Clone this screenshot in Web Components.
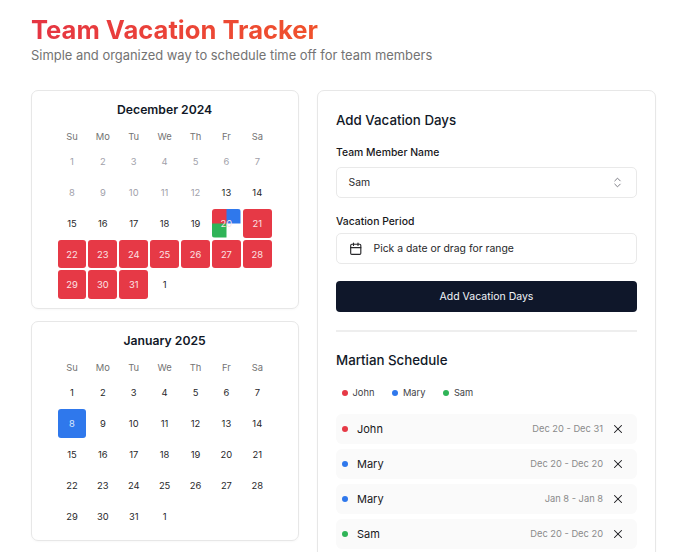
<!DOCTYPE html>
<html>
<head>
<meta charset="utf-8">
<title>Team Vacation Tracker</title>
<style>
html, body { margin: 0; height: 552px; overflow: hidden; background: #fff; }
body { font-family: Inter, "Liberation Sans", sans-serif; color: #0f172a; }
</style>
</head>
<body>
<tracker-app></tracker-app>

<template id="app_template">
<style>
:host { display: block; padding: 15px 24px 0 31px; }
.columns { display: flex; align-items: flex-start; column-gap: 18px; margin-top: 26px; }
.calendars { display: flex; flex-direction: column; row-gap: 12px; width: 268px; flex: none; }
</style>
<page-header></page-header>
<div class="columns">
    <div class="calendars">
        <month-calendar title="December 2024" muted="12" booked="21-31" split="20"></month-calendar>
        <month-calendar title="January 2025" selected="8"></month-calendar>
    </div>
    <vacation-panel></vacation-panel>
</div>
</template>

<template id="header_template">
<style>
:host { display: block; }
h1 {
    margin: 0;
    font-size: 25.6px;
    line-height: 30px;
    font-weight: 700;
    width: fit-content;
    background: linear-gradient(90deg, #e53543, #f0522c);
    -webkit-background-clip: text;
    background-clip: text;
    color: transparent;
}
p { margin: 1px 0 0; font-size: 12.93px; line-height: 18px; color: #737373; }
</style>
<h1>Team Vacation Tracker</h1>
<p>Simple and organized way to schedule time off for team members</p>
</template>

<template id="calendar_template">
<style>
:host { display: block; }
.card {
    box-sizing: border-box;
    border: 1px solid #e7e7e7;
    border-radius: 7px;
    padding: 11px 26.25px 9px 25.5px;
    box-shadow: 0 1px 2px rgba(0, 0, 0, 0.03);
}
h2 { margin: 0 0 11px; text-align: center; font-size: 12.2px; line-height: 16px; font-weight: 600; color: #111827; }
.grid { display: grid; grid-template-columns: repeat(7, 1fr); gap: 2px; }
.head { height: 16px; line-height: 16px; text-align: center; font-size: 9.4px; color: #737373; }
.day {
    height: 28.86px;
    border-radius: 3px;
    display: flex;
    align-items: center;
    justify-content: center;
    font-size: 9.4px;
    color: #27272a;
    position: relative;
}
.muted { color: #a1a1aa; }
.booked { background: #e63946; color: #fbe3e5; }
.selected { background: #2f78ec; color: #dbe8fd; }
.split {
    color: #fbe3e5;
    background:
        linear-gradient(#e63946, #e63946) 0 0 / 50% 50% no-repeat,
        linear-gradient(#2f78ec, #2f78ec) 100% 0 / 50% 50% no-repeat,
        linear-gradient(#2fb457, #2fb457) 0 100% / 50% 50% no-repeat;
}
</style>
<div class="card">
    <h2></h2>
    <div class="grid"></div>
</div>
</template>

<template id="panel_template">
<style>
:host { display: block; width: 339px; flex: none; }
.card {
    box-sizing: border-box;
    border: 1px solid #e7e7e7;
    border-radius: 7px;
    padding: 19px 18px 18px;
    box-shadow: 0 1px 2px rgba(0, 0, 0, 0.03);
}
h2 { margin: 0; font-size: 13.3px; line-height: 20px; font-weight: 500; color: #111827; }
label { display: block; font-size: 10.4px; line-height: 14px; font-weight: 450; color: #18181b; }
.name-field { margin-top: 16px; }
.name-field .control { margin-top: 7px; }
.period-field { margin-top: 17px; }
.period-field .control { margin-top: 4px; }
.control {
    box-sizing: border-box;
    height: 31px;
    border: 1px solid #e9e9e9;
    border-radius: 5px;
    display: flex;
    align-items: center;
    padding: 0 12px 0 11.5px;
    font-size: 10.4px;
    color: #27272a;
}
.control span { flex: 1; }
.date { column-gap: 11.5px; }
svg { flex: none; fill: none; stroke: currentColor; stroke-linecap: round; stroke-linejoin: round; }
.chevrons { color: #71717a; }
button {
    display: block;
    width: 100%;
    height: 31px;
    margin-top: 17px;
    border: 0;
    border-radius: 4px;
    background: #0f172a;
    color: #f1f5f9;
    font: 400 10.5px Inter, "Liberation Sans", sans-serif;
}
hr { border: 0; height: 1.5px; background: #eeeeee; margin: 18px 0 18px; }
.legend { display: flex; column-gap: 18px; padding-left: 6px; margin: 16px 0 14px; }
.rows { display: flex; flex-direction: column; row-gap: 5px; }
</style>
<div class="card">
    <h2>Add Vacation Days</h2>
    <div class="name-field">
        <label>Team Member Name</label>
        <div class="control">
            <span>Sam</span>
            <svg class="chevrons" width="13" height="13" viewBox="0 0 24 24" stroke-width="1.7"><path d="m7 15 5 5 5-5"/><path d="m7 9 5-5 5 5"/></svg>
        </div>
    </div>
    <div class="period-field">
        <label>Vacation Period</label>
        <div class="control date">
            <svg width="13.5" height="13.5" viewBox="0 0 24 24" stroke-width="2"><path d="M8 2v4"/><path d="M16 2v4"/><rect x="3" y="4" width="18" height="18" rx="2"/><path d="M3 10h18"/></svg>
            <span>Pick a date or drag for range</span>
        </div>
    </div>
    <button>Add Vacation Days</button>
    <hr>
    <h2>Martian Schedule</h2>
    <div class="legend">
        <legend-item color="#e63946">John</legend-item>
        <legend-item color="#2f78ec">Mary</legend-item>
        <legend-item color="#2fb457">Sam</legend-item>
    </div>
    <div class="rows">
        <schedule-row color="#e63946" range="Dec 20 - Dec 31">John</schedule-row>
        <schedule-row color="#2f78ec" range="Dec 20 - Dec 20">Mary</schedule-row>
        <schedule-row color="#2f78ec" range="Jan 8 - Jan 8">Mary</schedule-row>
        <schedule-row color="#2fb457" range="Dec 20 - Dec 20">Sam</schedule-row>
    </div>
</div>
</template>

<template id="legend_template">
<style>
:host { display: flex; align-items: center; column-gap: 4.5px; font-size: 9.3px; line-height: 14px; color: #3f3f46; }
i { width: 6px; height: 6px; border-radius: 50%; background: var(--dot); }
</style>
<i></i><slot></slot>
</template>

<template id="row_template">
<style>
:host { display: flex; align-items: center; height: 30px; padding: 0 12px 0 6px; border-radius: 6px; background: #fafafa; }
i { width: 6px; height: 6px; border-radius: 50%; background: var(--dot); margin-right: 9px; }
.name { flex: 1; font-size: 11px; font-weight: 400; color: #18181b; }
.range { font-size: 9.3px; color: #8a8a8a; margin-right: 8px; }
svg { fill: none; stroke: #18181b; stroke-width: 1.8; stroke-linecap: round; stroke-linejoin: round; }
</style>
<i></i>
<span class="name"><slot></slot></span>
<span class="range"></span>
<svg width="14" height="14" viewBox="0 0 24 24"><path d="M18 6 6 18"/><path d="m6 6 12 12"/></svg>
</template>

<script>
// Clones a template into an open shadow root
function shadowFrom(el, id) {
    const shadow = el.attachShadow({ mode: "open" });
    shadow.appendChild(document.getElementById(id).content.cloneNode(true));
    return shadow;
}

class TrackerApp extends HTMLElement {
    connectedCallback() {
        if (!this.shadowRoot) shadowFrom(this, "app_template");
    }
}

class PageHeader extends HTMLElement {
    connectedCallback() {
        if (!this.shadowRoot) shadowFrom(this, "header_template");
    }
}

class MonthCalendar extends HTMLElement {
    connectedCallback() {
        if (this.shadowRoot) return;
        const shadow = shadowFrom(this, "calendar_template");
        shadow.querySelector("h2").textContent = this.getAttribute("title");
        this.removeAttribute("title");
        const grid = shadow.querySelector(".grid");
        for (const name of ["Su", "Mo", "Tu", "We", "Th", "Fr", "Sa"]) {
            const head = document.createElement("div");
            head.className = "head";
            head.textContent = name;
            grid.appendChild(head);
        }
        const muted = Number(this.getAttribute("muted") || 0);
        const selected = Number(this.getAttribute("selected") || 0);
        const split = Number(this.getAttribute("split") || 0);
        const [from, to] = (this.getAttribute("booked") || "0-0").split("-").map(Number);
        for (let d = 1; d <= 32; d++) {
            const cell = document.createElement("div");
            cell.className = "day";
            // the 32nd cell is the spill-over "1" of the next month
            cell.textContent = d === 32 ? 1 : d;
            if (d <= muted) cell.classList.add("muted");
            if (d >= from && d <= to) cell.classList.add("booked");
            if (d === selected) cell.classList.add("selected");
            if (d === split) cell.classList.add("split");
            grid.appendChild(cell);
        }
    }
}

class VacationPanel extends HTMLElement {
    connectedCallback() {
        if (!this.shadowRoot) shadowFrom(this, "panel_template");
    }
}

class LegendItem extends HTMLElement {
    connectedCallback() {
        if (this.shadowRoot) return;
        shadowFrom(this, "legend_template");
        this.style.setProperty("--dot", this.getAttribute("color"));
    }
}

class ScheduleRow extends HTMLElement {
    connectedCallback() {
        if (this.shadowRoot) return;
        const shadow = shadowFrom(this, "row_template");
        this.style.setProperty("--dot", this.getAttribute("color"));
        shadow.querySelector(".range").textContent = this.getAttribute("range");
    }
}

customElements.define("month-calendar", MonthCalendar);
customElements.define("legend-item", LegendItem);
customElements.define("schedule-row", ScheduleRow);
customElements.define("vacation-panel", VacationPanel);
customElements.define("page-header", PageHeader);
customElements.define("tracker-app", TrackerApp);
</script>
</body>
</html>
